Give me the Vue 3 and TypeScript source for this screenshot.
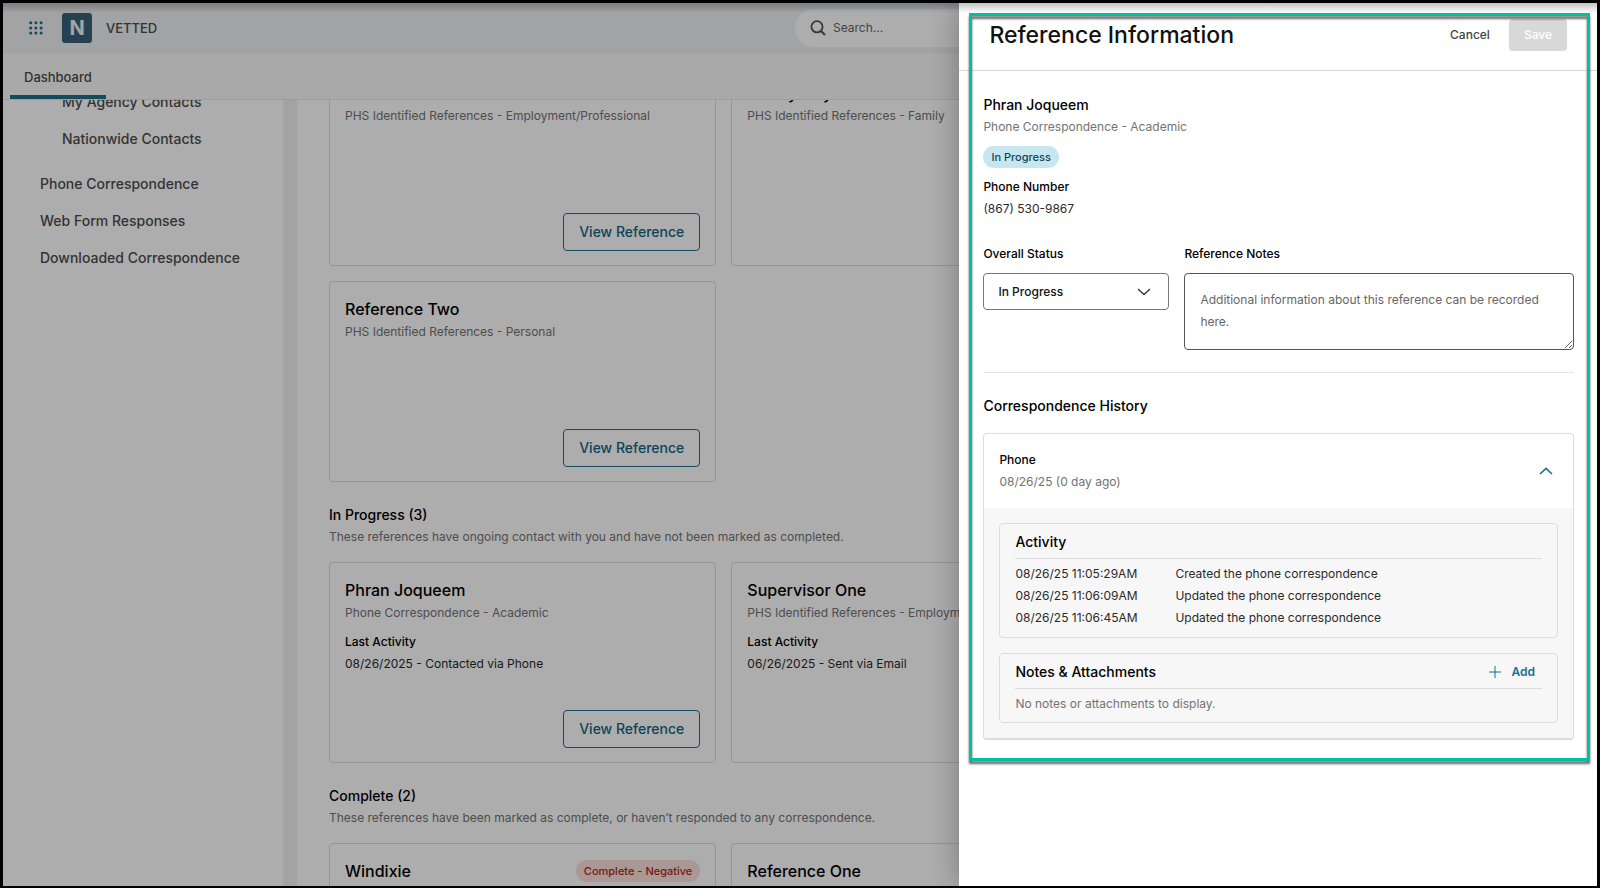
<script setup lang="ts">
import { ref } from 'vue'

interface ReferenceCard {
  name: string
  source: string
  activity?: string
  badge?: string
}

interface Section {
  title: string
  description: string
  cards: ReferenceCard[]
}

interface Activity {
  time: string
  text: string
}

const pending: ReferenceCard[] = [
  { name: '', source: 'PHS Identified References - Employment/Professional' },
  { name: 'Family Guy', source: 'PHS Identified References - Family' },
  { name: '', source: '' },
  { name: 'Reference Two', source: 'PHS Identified References - Personal' },
]

const sections: Section[] = [
  {
    title: 'In Progress (3)',
    description: 'These references have ongoing contact with you and have not been marked as completed.',
    cards: [
      { name: 'Phran Joqueem', source: 'Phone Correspondence - Academic', activity: '08/26/2025 - Contacted via Phone' },
      { name: 'Supervisor One', source: 'PHS Identified References - Employment/Professional', activity: '06/26/2025 - Sent via Email' },
    ],
  },
  {
    title: 'Complete (2)',
    description: 'These references have been marked as complete, or haven’t responded to any correspondence.',
    cards: [
      { name: 'Windixie', source: '', badge: 'Complete - Negative' },
      { name: 'Reference One', source: '' },
    ],
  },
]

const activities: Activity[] = [
  { time: '08/26/25 11:05:29AM', text: 'Created the phone correspondence' },
  { time: '08/26/25 11:06:09AM', text: 'Updated the phone correspondence' },
  { time: '08/26/25 11:06:45AM', text: 'Updated the phone correspondence' },
]

const dots: number[] = [0, 1, 2, 3, 4, 5, 6, 7, 8]
const status = ref('In Progress')
const notes = ref('')
const search = ref('')
const expanded = ref(true)
</script>

<template>
  <div class="shell">
    <div class="page">
      <header class="topbar">
        <button class="icon-button" aria-label="Apps">
          <svg width="14" height="14" viewBox="0 0 14 14">
            <circle v-for="d in dots" :key="d" :cx="1.7 + (d % 3) * 5.2" :cy="1.7 + Math.floor(d / 3) * 5.2" r="1.5" fill="#1a6f8c" />
          </svg>
        </button>
        <span class="logo">N</span>
        <span class="brand">VETTED</span>
        <label class="search">
          <svg width="16" height="16" viewBox="0 0 16 16" fill="none" stroke="#555" stroke-width="1.8">
            <circle cx="7" cy="6.8" r="5.6" />
            <path d="M11 11l4 4" stroke-width="2.2" />
          </svg>
          <input v-model="search" type="text" placeholder="Search..." aria-label="Search" />
        </label>
      </header>
      <nav class="tabs"><a href="#" class="tab">Dashboard</a></nav>
      <div class="columns">
        <nav class="sidebar">
          <div class="side-list">
            <a href="#" class="nested">My Agency Contacts</a>
            <a href="#" class="nested last">Nationwide Contacts</a>
            <a href="#">Phone Correspondence</a>
            <a href="#">Web Form Responses</a>
            <a href="#">Downloaded Correspondence</a>
          </div>
        </nav>
        <main class="content">
          <div class="scrolled">
            <div class="cards">
              <article v-for="(card, i) in pending" :key="i" class="card" :class="{ blank: !card.source }">
                <h3>{{ card.name }}</h3>
                <p class="muted">{{ card.source }}</p>
                <button v-if="card.source" class="view">View Reference</button>
              </article>
            </div>
            <section v-for="section in sections" :key="section.title" class="group">
              <h2>{{ section.title }}</h2>
              <p class="muted">{{ section.description }}</p>
              <div class="cards">
                <article v-for="card in section.cards" :key="card.name" class="card">
                  <div class="card-head">
                    <h3>{{ card.name }}</h3>
                    <span v-if="card.badge" class="badge negative">{{ card.badge }}</span>
                  </div>
                  <p class="muted">{{ card.source }}</p>
                  <template v-if="card.activity">
                    <h4>Last Activity</h4>
                    <p>{{ card.activity }}</p>
                    <button class="view">View Reference</button>
                  </template>
                </article>
              </div>
            </section>
          </div>
        </main>
      </div>

      <div class="backdrop"></div>

      <aside class="drawer">
        <header class="drawer-head">
          <h1>Reference Information</h1>
          <button class="cancel">Cancel</button>
          <button class="save" disabled>Save</button>
        </header>
        <div class="drawer-body">
          <h2 class="person">Phran Joqueem</h2>
          <p class="muted">Phone Correspondence - Academic</p>
          <span class="badge progress">In Progress</span>
          <h4>Phone Number</h4>
          <p>(867) 530-9867</p>

          <div class="form">
            <div class="field">
              <label for="status">Overall Status</label>
              <div class="select">
                <select id="status" v-model="status">
                  <option>In Progress</option>
                  <option>Complete</option>
                </select>
                <svg width="14" height="8" viewBox="0 0 14 8" fill="none" stroke="#333" stroke-width="1.3"><path d="M1 1l6 5.6L13 1" /></svg>
              </div>
            </div>
            <div class="field">
              <label for="notes">Reference Notes</label>
              <textarea id="notes" v-model="notes" placeholder="Additional information about this reference can be recorded here."></textarea>
            </div>
          </div>

          <h2 class="history">Correspondence History</h2>
          <section class="accordion">
            <div class="accordion-head">
              <div>
                <h4>Phone</h4>
                <p class="muted">08/26/25 (0 day ago)</p>
              </div>
              <button class="icon-button" aria-label="Toggle phone correspondence" @click="expanded = !expanded">
                <svg width="14" height="8" viewBox="0 0 14 8" fill="none" stroke="#1a6f8c" stroke-width="1.6"><path d="M1 7l6-5.6L13 7" /></svg>
              </button>
            </div>
            <div v-if="expanded" class="accordion-body">
              <section class="panel activity">
                <div class="panel-head"><h3>Activity</h3></div>
                <table>
                  <tbody>
                    <tr v-for="a in activities" :key="a.time">
                      <td class="time">{{ a.time }}</td>
                      <td>{{ a.text }}</td>
                    </tr>
                  </tbody>
                </table>
              </section>
              <section class="panel">
                <div class="panel-head">
                  <h3>Notes &amp; Attachments</h3>
                  <button class="add">
                    <svg width="12" height="12" viewBox="0 0 12 12" stroke="#1a6f8c" stroke-width="1"><path d="M6 0v12M0 6h12" /></svg>
                    Add
                  </button>
                </div>
                <p class="muted">No notes or attachments to display.</p>
              </section>
            </div>
          </section>
        </div>
        <div class="highlight"></div>
      </aside>
      <div class="top-shade"></div>
    </div>
  </div>
</template>

<style>
body {
  background: #000;
}
</style>

<style scoped>
* {
  box-sizing: border-box;
}
h1, h2, h3, h4, p {
  margin: 0;
}
button, input, select, textarea {
  font: inherit;
  color: inherit;
}
button {
  border: 0;
  padding: 0;
  background: none;
}
a {
  color: inherit;
  text-decoration: none;
}
svg {
  display: block;
}
.shell {
  height: 100vh;
  padding: 3px 3px 2px;
  background: #000;
  font: 12px/22px Inter, Roboto, sans-serif;
  color: #2a2a2a;
}
.page {
  position: relative;
  height: 100%;
  overflow: hidden;
  display: flex;
  flex-direction: column;
  background: #fff;
}
h2, h3 {
  font-size: 14px;
  font-weight: 500;
  color: #000;
}
h4 {
  font-size: 12px;
  font-weight: 500;
  color: #000;
}
.muted {
  color: #737373;
}

.topbar {
  flex: none;
  height: 51px;
  padding: 0 0 1px 26px;
  display: flex;
  align-items: center;
  background: #edf0f3;
}
.logo {
  width: 30px;
  height: 30px;
  margin: 0 14px 0 19px;
  border-radius: 3px;
  background: #396278;
  color: #f4f4f4;
  font-size: 20px;
  font-weight: 700;
  line-height: 30px;
  text-align: center;
}
.brand {
  flex: 0 0 689px;
  font-size: 13px;
  font-weight: 500;
  color: #4c4c4c;
}
.search {
  flex: 1;
  height: 38px;
  margin-right: 400px;
  padding-left: 15px;
  display: flex;
  align-items: center;
  gap: 7px;
  border-radius: 19px;
  background: #fff;
}
.search input {
  padding: 0;
  border: 0;
  background: none;
  font-size: 12px;
}
.tabs {
  flex: none;
  height: 46px;
  padding-left: 7px;
  background: #f9f9f9;
  border-bottom: 1px solid #e6e6e6;
}
.tab {
  display: inline-block;
  height: 45px;
  padding: 0 14px;
  border-bottom: 4px solid #1a6f8c;
  font-size: 13px;
  font-weight: 500;
  line-height: 46px;
  color: #4c4c4c;
}
.columns {
  flex: 1;
  min-height: 0;
  display: flex;
  gap: 14px;
  background: #f0f0f0;
}
.sidebar {
  flex: 0 0 280px;
  overflow: hidden;
  background: #fff;
}
.side-list {
  display: flex;
  flex-direction: column;
  margin-top: -17px;
  padding-left: 37px;
  font-size: 14px;
  font-weight: 500;
  line-height: 37px;
  color: #4c4c4c;
}
.nested {
  padding-left: 22px;
}
.last {
  margin-bottom: 8px;
}
.content {
  flex: 1;
  overflow: hidden;
  padding: 0 76px 0 32px;
  background: #fff;
}
.scrolled {
  margin-top: -35px;
}
.cards {
  display: grid;
  grid-template-columns: repeat(3, 1fr);
  grid-auto-rows: 201px;
  gap: 15px;
}
.card {
  display: flex;
  flex-direction: column;
  padding: 15px 15px 14px;
  border: 1px solid #dcdcdc;
  border-radius: 4px;
}
.blank {
  visibility: hidden;
}
.card h3 {
  min-height: 24px;
  font-size: 16px;
  line-height: 24px;
}
.card h4 {
  margin-top: 7px;
}
.card-head {
  display: flex;
  align-items: center;
  justify-content: space-between;
}
.view {
  margin-top: auto;
  align-self: flex-end;
  height: 38px;
  padding: 0 15px;
  border: 1px solid #1a6f8c;
  border-radius: 4px;
  font-size: 14px;
  font-weight: 500;
  color: #14657f;
}
.group {
  padding-top: 22px;
}
.group .cards {
  margin-top: 14px;
}
.badge {
  height: 22px;
  padding: 0 8px;
  border-radius: 11px;
  font-size: 11px;
  font-weight: 500;
}
.negative {
  background: #fbe0da;
  color: #b3261a;
}
.progress {
  align-self: flex-start;
  margin: 8px 0;
  background: #c8e6ef;
  color: #0d4557;
}

.backdrop {
  position: absolute;
  inset: 0;
  background: rgba(0, 0, 0, 0.32);
}
.drawer {
  position: absolute;
  inset: 0 0 0 auto;
  width: 40%;
  background: #fff;
  box-shadow: 0 0 28px rgba(0, 0, 0, 0.3);
}
.drawer-head {
  height: 68px;
  padding: 0 30px 3px;
  display: flex;
  align-items: center;
  border-bottom: 1px solid #d8d8d8;
}
h1 {
  flex: 1;
  font-size: 23px;
  font-weight: 500;
  color: #111;
}
.cancel {
  margin-right: 19px;
  font-weight: 500;
  color: #444;
}
.save {
  height: 32px;
  padding: 0 15px;
  border-radius: 4px;
  background: #d8d8d8;
  color: #fff;
  font-weight: 500;
}
.drawer-body {
  display: flex;
  flex-direction: column;
  padding: 23px 23px 0 24px;
}
.form {
  display: grid;
  grid-template-columns: 186px 1fr;
  gap: 15px;
  margin-top: 23px;
  padding-bottom: 22px;
  border-bottom: 1px solid #e6e6e6;
}
.field {
  display: flex;
  flex-direction: column;
  gap: 8px;
}
.field label {
  font-weight: 500;
  color: #000;
}
.select {
  position: relative;
}
select {
  appearance: none;
  width: 100%;
  height: 37px;
  padding: 0 14px;
  border: 1px solid #777;
  border-radius: 4px;
  background: #fff;
  color: #111;
  font-weight: 500;
}
.select svg {
  position: absolute;
  right: 18px;
  top: 15px;
  pointer-events: none;
}
textarea {
  height: 77px;
  padding: 15px;
  border: 1px solid #555;
  border-radius: 4px;
  background: #fff;
}
textarea::placeholder, .search input::placeholder {
  color: #666;
}
.history {
  margin: 22px 0 16px;
}
.accordion {
  border: 1px solid #dcdcdc;
  border-bottom-width: 2px;
  border-radius: 4px;
  overflow: hidden;
}
.accordion-head {
  height: 74px;
  padding: 0 15px;
  display: flex;
  align-items: center;
  justify-content: space-between;
}
.accordion-head .icon-button {
  padding: 5px;
}
.accordion-body {
  display: flex;
  flex-direction: column;
  gap: 15px;
  padding: 15px;
  background: #f7f7f7;
}
.panel {
  padding: 5px 15px 7px;
  border: 1px solid #dcdcdc;
  border-radius: 4px;
}
.activity {
  padding-bottom: 8px;
}
.panel-head {
  display: flex;
  justify-content: space-between;
  align-items: center;
  height: 30px;
  margin-bottom: 4px;
  padding: 0 7px 3px 0;
  border-bottom: 1px solid #dcdcdc;
}
.add {
  display: flex;
  align-items: center;
  gap: 10px;
  font-weight: 600;
  color: #1a6f8c;
}
table {
  border-collapse: collapse;
}
td {
  padding: 0;
}
.time {
  width: 160px;
}
.highlight {
  position: absolute;
  inset: 10px 7px auto 10px;
  height: 748px;
  border: 3px solid #06bfa2;
  filter: drop-shadow(0 3px 1px rgba(0, 0, 0, 0.6));
  pointer-events: none;
}
.top-shade {
  position: absolute;
  inset: 0 0 auto;
  height: 10px;
  background: linear-gradient(rgba(0, 0, 0, 0.24), transparent);
  pointer-events: none;
}
</style>
